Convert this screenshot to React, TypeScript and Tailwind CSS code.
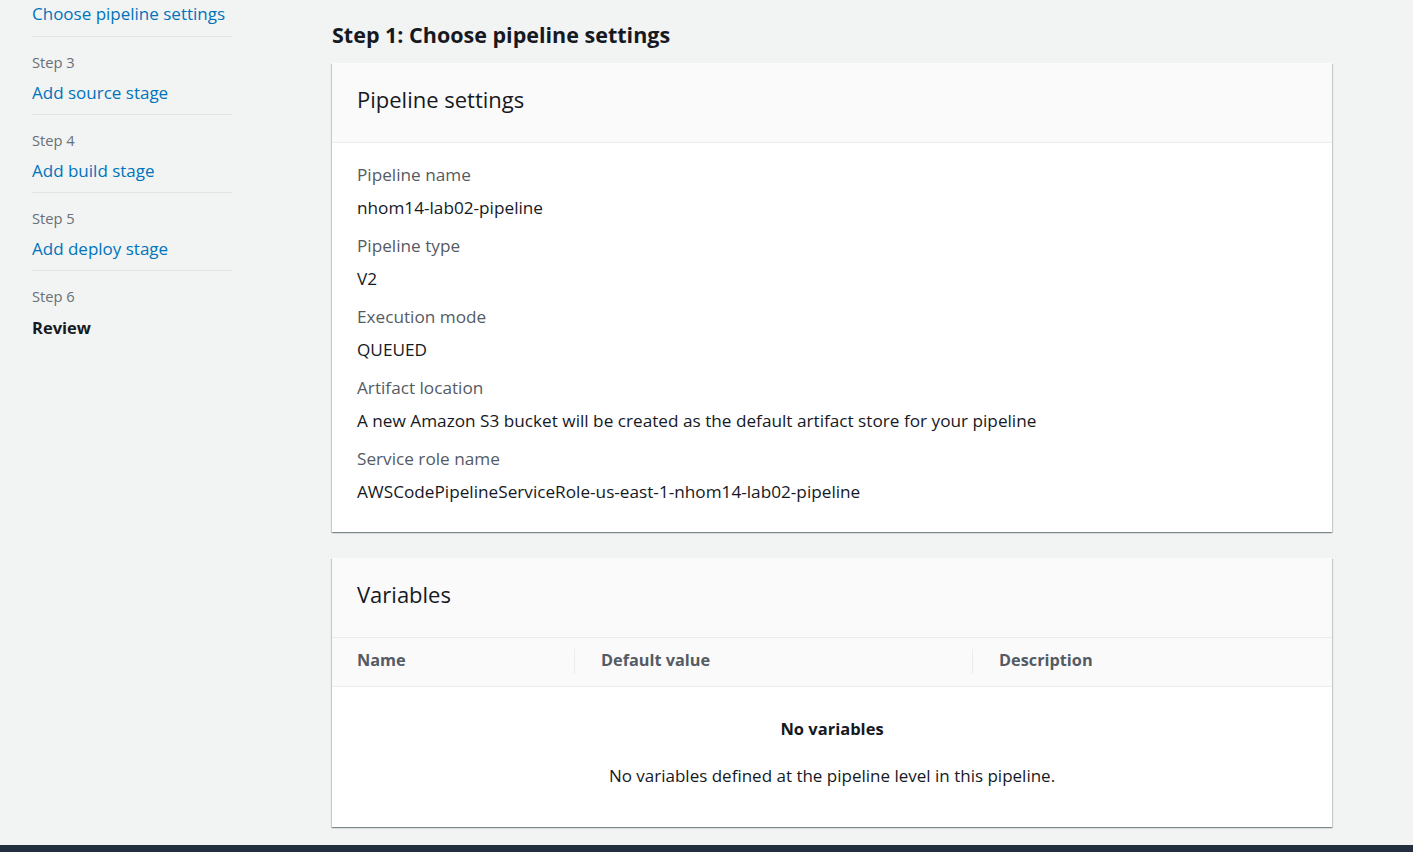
import React from "react";

const font = { fontFamily: '"Open Sans", "Noto Sans", Arial, sans-serif' };

function NavStep({ step, label, last, active }: { step: string; label: string; last?: boolean; active?: boolean }) {
  return (
    <div className={`${last ? "" : "border-b border-[#e1e4e4]"} pt-[15px] pb-[9px]`}>
      <div className="text-[14.7px] leading-[20px] text-[#687078]">{step}</div>
      {active ? (
        <div className="text-[16.5px] leading-[24px] mt-[10px] font-bold text-[#16191f]">{label}</div>
      ) : (
        <div className="text-[17px] leading-[24px] mt-[9px] text-[#0073bb]">{label}</div>
      )}
    </div>
  );
}

function Field({ label, value }: { label: string; value: string }) {
  return (
    <div className="flex flex-col">
      <div className="text-[17.2px] leading-[22px] text-[#545b64]">{label}</div>
      <div className="text-[17.2px] leading-[22px] text-[#16191f] mt-[11px]">{value}</div>
    </div>
  );
}

const shadow =
  "shadow-[0_1px_1px_0_rgba(0,28,36,0.3),1px_1px_1px_0_rgba(0,28,36,0.15),-1px_1px_1px_0_rgba(0,28,36,0.15)]";

export default function App() {
  return (
    <div className="w-[1413px] h-[852px] bg-[#f2f3f3] overflow-hidden flex flex-col" style={font}>
      <div className="flex flex-1 min-h-0">
        <aside className="w-[332px] shrink-0 pl-[32px]">
          <div className="w-[200px]">
            <div className="border-b border-[#e1e4e4] pb-[10px] pt-[2px]">
              <div className="text-[17px] leading-[24px] text-[#0073bb] whitespace-nowrap">Choose pipeline settings</div>
            </div>
            <NavStep step="Step 3" label="Add source stage" />
            <NavStep step="Step 4" label="Add build stage" />
            <NavStep step="Step 5" label="Add deploy stage" />
            <NavStep step="Step 6" label="Review" last active />
          </div>
        </aside>
        <main className="w-[1000px] shrink-0">
          <h1 className="text-[21.5px] leading-[28px] font-bold text-[#16191f] mt-[21px] mb-[14px] whitespace-nowrap">
            Step 1: Choose pipeline settings
          </h1>
          <section className={`bg-white ${shadow}`}>
            <div className="bg-[#fafafa] border-b border-[#eaeded] h-[80px] px-[25px] pt-[22px]">
              <h2 className="text-[22px] leading-[28px] text-[#16191f]">Pipeline settings</h2>
            </div>
            <div className="px-[25px] pt-[21px] pb-[29px] flex flex-col gap-[16px]">
              <Field label="Pipeline name" value="nhom14-lab02-pipeline" />
              <Field label="Pipeline type" value="V2" />
              <Field label="Execution mode" value="QUEUED" />
              <Field label="Artifact location" value="A new Amazon S3 bucket will be created as the default artifact store for your pipeline" />
              <Field label="Service role name" value="AWSCodePipelineServiceRole-us-east-1-nhom14-lab02-pipeline" />
            </div>
          </section>
          <section className={`mt-[26px] bg-white ${shadow}`}>
            <div className="bg-[#fafafa] border-b border-[#eaeded] h-[80px] px-[25px] pt-[22px]">
              <h2 className="text-[22px] leading-[28px] text-[#16191f]">Variables</h2>
            </div>
            <div className="bg-[#fafafa] border-b border-[#eaeded] h-[49px] flex items-center pb-[3px] text-[16.3px] font-bold text-[#545b64]">
              <div className="w-[243px] pl-[25px] relative flex items-center h-full">
                Name
                <span className="absolute right-0 top-[11px] h-[25px] border-l border-[#eaeded]" />
              </div>
              <div className="w-[398px] pl-[26px] relative flex items-center h-full">
                Default value
                <span className="absolute right-0 top-[11px] h-[25px] border-l border-[#eaeded]" />
              </div>
              <div className="flex-1 pl-[26px] flex items-center h-full">Description</div>
            </div>
            <div className="h-[140px] flex flex-col items-center pt-[31px]">
              <div className="text-[16.5px] leading-[22px] font-bold text-[#16191f]">No variables</div>
              <div className="text-[17px] leading-[22px] text-[#16191f] mt-[25px]">
                No variables defined at the pipeline level in this pipeline.
              </div>
            </div>
          </section>
        </main>
      </div>
      <div className="h-[7px] bg-[#232f3e] shrink-0" />
    </div>
  );
}
